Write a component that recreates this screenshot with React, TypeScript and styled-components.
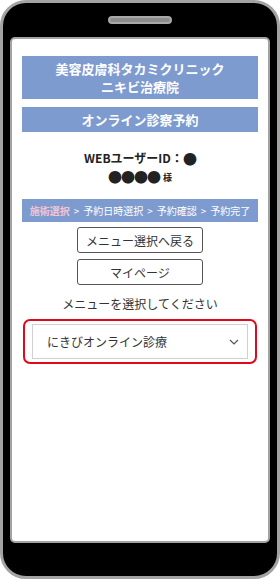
import React from 'react';
import styled, { createGlobalStyle } from 'styled-components';

const GlobalStyle = createGlobalStyle`
  html, body {
    margin: 0;
    padding: 0;
    background: #ffffff;
  }
  body {
    font-family: "Noto Sans CJK JP", "Noto Sans", sans-serif;
  }
`;

const Phone = styled.div`
  box-sizing: border-box;
  width: 280px;
  height: 579px;
  background: #000;
  border: 3px solid #a3a3a3;
  border-radius: 26px;
  display: flex;
  flex-direction: column;
  align-items: stretch;
`;

const SpeakerArea = styled.div`
  height: 34px;
  display: flex;
  justify-content: center;
  padding-top: 13px;
  box-sizing: border-box;
`;

const Speaker = styled.div`
  box-sizing: border-box;
  width: 64px;
  height: 8px;
  border-radius: 4px;
  background: #8c8c8c;
  border: 2px solid #a8a8a8;
`;

const Screen = styled.div`
  box-sizing: border-box;
  margin: 0 7px;
  height: 506px;
  background: #fff;
  border: 2px solid #a3a3a3;
  border-radius: 5px;
  padding: 17px 10px 0;
  display: flex;
  flex-direction: column;
  align-items: stretch;
`;

const TitleBar = styled.div<{ $h: number }>`
  box-sizing: border-box;
  background: #7e9bd0;
  color: #fff;
  font-weight: 700;
  font-size: 13px;
  height: ${p => p.$h}px;
  display: flex;
  flex-direction: column;
  align-items: center;
  justify-content: center;
  text-align: center;
  margin-bottom: 8px;
`;

const TitleLine = styled.span`
  display: block;
  height: 18px;
  line-height: 18px;
`;

const UserInfo = styled.div`
  margin-top: 9px;
  display: flex;
  flex-direction: column;
  align-items: center;
  color: #222;
  font-size: 12px;
  font-weight: 700;
`;

const InfoLine = styled.div`
  height: 18px;
  line-height: 18px;
  display: flex;
  align-items: center;
`;

const Dots = styled.span`
  font-size: 14px;
  line-height: 18px;
  letter-spacing: -1px;
`;

const Sama = styled.span`
  font-size: 9px;
  line-height: 14px;
  margin-left: 3px;
  padding-top: 3px;
`;

const Steps = styled.div`
  margin-top: 14px;
  height: 23px;
  background: #7e9bd0;
  color: #fff;
  font-size: 10px;
  display: flex;
  align-items: center;
  justify-content: center;
  white-space: nowrap;
`;

const StepActive = styled.span`
  color: #f7c3d3;
  font-weight: 700;
`;

const Sep = styled.span`
  margin: 0 4px;
`;

const ButtonCol = styled.div`
  margin-top: 5px;
  display: flex;
  flex-direction: column;
  align-items: center;
  gap: 6px;
`;

const OutlineButton = styled.button`
  box-sizing: border-box;
  width: 126px;
  height: 26px;
  background: #fff;
  border: 1px solid #555;
  border-radius: 3px;
  font-family: inherit;
  font-size: 12px;
  color: #333;
  padding: 0;
`;

const Prompt = styled.div`
  margin-top: 10px;
  text-align: center;
  font-size: 12px;
  color: #333;
  height: 18px;
  line-height: 18px;
`;

const Highlight = styled.div`
  box-sizing: border-box;
  margin-top: 6px;
  margin-left: 1px;
  margin-right: 1px;
  height: 45px;
  border: 2px solid #e0081c;
  border-radius: 7px;
  padding: 3px 7px;
`;

const Select = styled.div`
  box-sizing: border-box;
  height: 35px;
  border: 1px solid #d0d0d0;
  display: flex;
  align-items: center;
  justify-content: space-between;
  padding: 0 8px 0 14px;
  font-size: 12px;
  color: #333;
`;

const Chevron = () => (
  <svg width="10" height="6" viewBox="0 0 10 6">
    <path d="M1 1l4 4 4-4" fill="none" stroke="#555" strokeWidth="1.2" />
  </svg>
);

export default function App() {
  return (
    <>
      <GlobalStyle />
      <Phone>
        <SpeakerArea>
          <Speaker />
        </SpeakerArea>
        <Screen>
          <TitleBar $h={43}>
            <TitleLine>美容皮膚科タカミクリニック</TitleLine>
            <TitleLine>ニキビ治療院</TitleLine>
          </TitleBar>
          <TitleBar $h={25}>オンライン診察予約</TitleBar>
          <UserInfo>
            <InfoLine>WEBユーザーID：<Dots>●</Dots></InfoLine>
            <InfoLine><Dots>●●●●</Dots><Sama>様</Sama></InfoLine>
          </UserInfo>
          <Steps>
            <StepActive>施術選択</StepActive>
            <Sep>&gt;</Sep>予約日時選択
            <Sep>&gt;</Sep>予約確認
            <Sep>&gt;</Sep>予約完了
          </Steps>
          <ButtonCol>
            <OutlineButton>メニュー選択へ戻る</OutlineButton>
            <OutlineButton>マイページ</OutlineButton>
          </ButtonCol>
          <Prompt>メニューを選択してください</Prompt>
          <Highlight>
            <Select>
              <span>にきびオンライン診療</span>
              <Chevron />
            </Select>
          </Highlight>
        </Screen>
      </Phone>
    </>
  );
}
